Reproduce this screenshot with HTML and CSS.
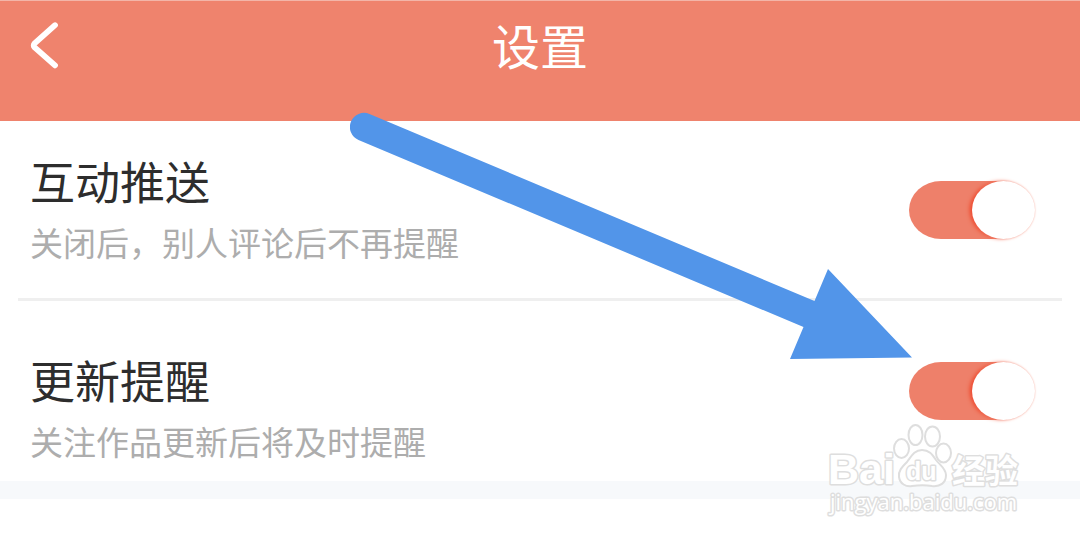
FILE: index.html
```html
<!DOCTYPE html>
<html lang="zh-CN">
<head>
<meta charset="utf-8">
<meta name="viewport" content="width=device-width, initial-scale=1">
<title>设置</title>
<link rel="stylesheet" href="styles.css">
</head>
<body>
<header class="topbar">
  <button class="back" type="button" aria-label="返回">
    <svg width="30" height="48" viewBox="0 0 30 48" fill="none" stroke="#fff" stroke-width="5.8" stroke-linecap="round" stroke-linejoin="round" aria-hidden="true"><path d="M25 3.200 4.600 21.400Q3 23.400 4.600 25.400L25 43.400"/></svg>
  </button>
  <h1 class="title">设置</h1>
</header>
<main>
  <section class="group">
    <div class="row">
      <div class="copy">
        <label class="name" for="push">互动推送</label>
        <p class="hint" id="push-hint">关闭后，别人评论后不再提醒</p>
      </div>
      <input class="switch" type="checkbox" role="switch" id="push" aria-describedby="push-hint" checked>
    </div>
    <div class="row">
      <div class="copy">
        <label class="name" for="update">更新提醒</label>
        <p class="hint" id="update-hint">关注作品更新后将及时提醒</p>
      </div>
      <input class="switch" type="checkbox" role="switch" id="update" aria-describedby="update-hint" checked>
    </div>
  </section>
</main>
<svg class="arrow" width="564" height="248" viewBox="350 112 564 248" aria-hidden="true">
  <path fill="#5295e9" d="M369.500 114 814.500 301 828 269 912 357.500 790 359 803.500 327 358.500 140A14 14 0 0 1 369.500 114Z"/>
</svg>
<svg class="watermark" width="200" height="96" viewBox="826 422 200 96">
  <g class="paw">
    <ellipse cx="901.500" cy="448.500" rx="7.500" ry="9.500"/>
    <ellipse cx="915.500" cy="435" rx="7" ry="10"/>
    <ellipse cx="932.500" cy="436.500" rx="7.500" ry="10"/>
    <ellipse cx="943.500" cy="453" rx="7.500" ry="9.500"/>
    <path d="M922 450C914 450 911 457 907 462 902 467 898 471 899 477 900 484 906 487 912 486 919 485 926 485 932 486 940 487 946 483 946 475 946 469 940 465 936 460 932 454 929 450 922 450Z"/>
  </g>
  <text class="brand" x="828" y="484">Bai</text>
  <text class="du" x="906" y="480">du</text>
  <text class="cn" x="952" y="483">经验</text>
  <text class="site" x="830" y="510">jingyan.baidu.com</text>
</svg>
</body>
</html>
```
FILE: styles.css
```css
* {
  box-sizing: border-box;
}

body {
  position: relative;
  margin: 0;
  min-height: 100vh;
  background: #fff;
  color: #2d2d2d;
  font-family: "Noto Sans CJK SC", sans-serif;
}

.topbar {
  display: grid;
  grid-template-columns: 1fr auto 1fr;
  align-items: start;
  padding: 8px 30px 41px;
  border-top: 1px solid #f3b5a8;
  background: #ef836d;
  color: #fff;
}

.back {
  display: flex;
  justify-self: start;
  padding: 13px 0 0;
  border: 0;
  background: none;
  cursor: pointer;
}

.title {
  margin: 0;
  font-size: 48px;
  font-weight: 400;
  line-height: 71px;
}

.group {
  border-bottom: 18px solid #f7f9fb;
}

.row {
  display: flex;
  align-items: center;
  justify-content: space-between;
  margin: 0 18px;
  padding: 0 27px 0 12px;
}

.row + .row {
  border-top: 3px solid #efefef;
}

.copy {
  padding: 28px 0 29px;
}

.row + .row .copy {
  padding: 47px 0 13px;
}

.name {
  display: block;
  font-size: 45px;
  line-height: 64px;
}

.hint {
  margin: 2px 0 0;
  color: #adadad;
  font-size: 33px;
  line-height: 54px;
}

.switch {
  flex: none;
  width: 126px;
  height: 58px;
  margin: 0;
  appearance: none;
  border-radius: 32px / 29px;
  background: linear-gradient(90deg, #ee806a 98px, transparent 98px);
  cursor: pointer;
}

.switch::before {
  content: "";
  display: block;
  width: 63px;
  height: 58px;
  border-radius: 50%;
  background: #fff;
}

.switch:checked::before {
  margin-left: 63px;
  box-shadow: -3px 0 4px -1px #ee4024, 0 0 2px #f6b5a8;
}

.arrow {
  position: absolute;
  left: 350px;
  top: 112px;
  pointer-events: none;
}

.watermark {
  position: absolute;
  right: 54px;
  top: 422px;
  pointer-events: none;
  fill: #fff;
  stroke: #dedede;
  stroke-width: 2px;
  stroke-linejoin: round;
}

.watermark text {
  paint-order: stroke;
  stroke-width: 3px;
}

.brand {
  font: 700 43px "Liberation Sans", sans-serif;
}

.du {
  font: 700 25px "Liberation Sans", sans-serif;
}

.cn {
  font: 700 33px "Noto Sans CJK SC", sans-serif;
}

.site {
  font: 400 22px "Open Sans", sans-serif;
}
```
